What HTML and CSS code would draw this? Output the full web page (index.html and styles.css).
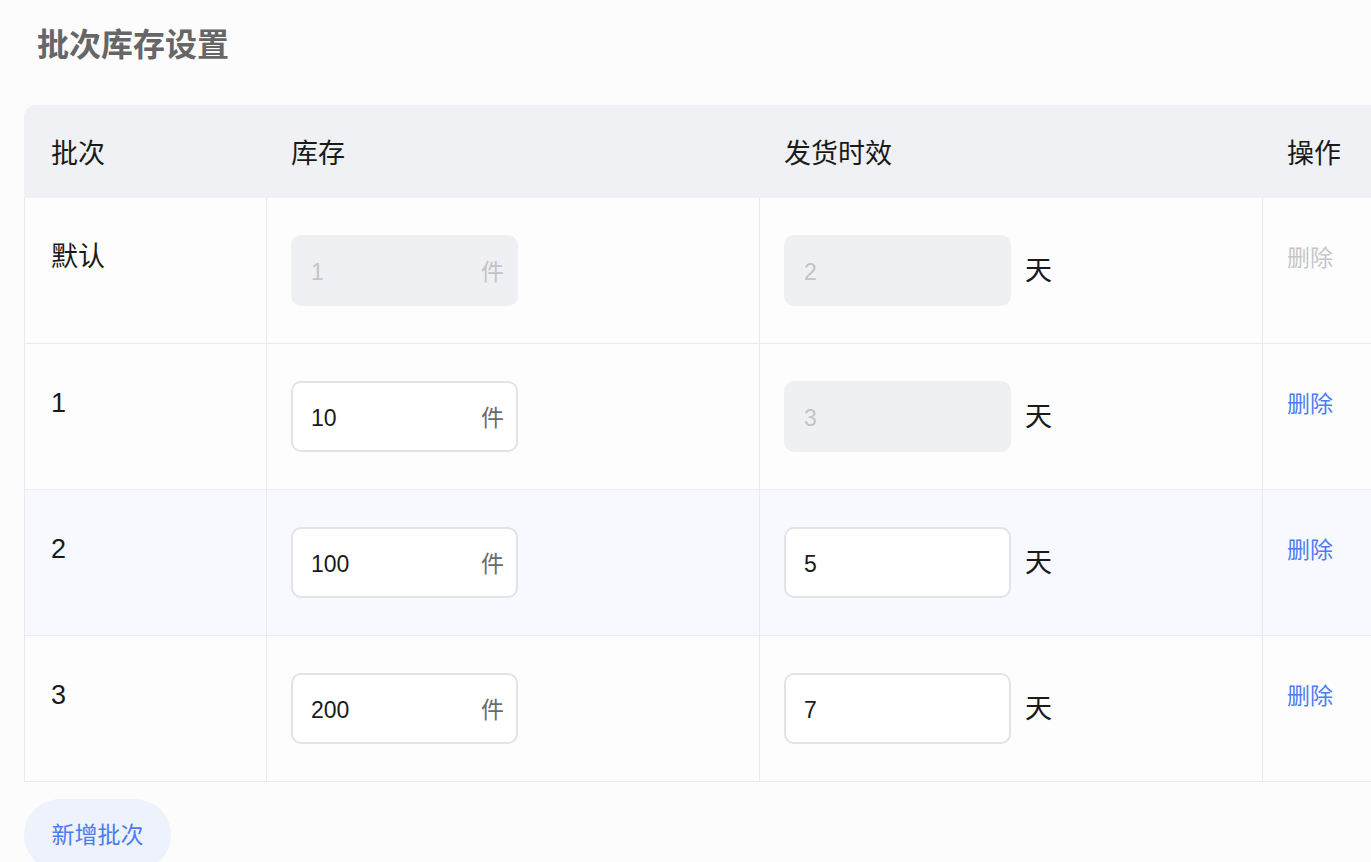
FILE: index.html
```html
<!DOCTYPE html>
<html lang="zh">
<head>
<meta charset="utf-8">
<link rel="stylesheet" href="styles.css">
</head>
<body>
<div class="page">
  <h1 class="title">批次库存设置</h1>
  <table class="grid">
    <colgroup>
      <col class="c1"><col class="c2"><col class="c3"><col class="c4">
    </colgroup>
    <thead>
      <tr><th class="first">批次</th><th>库存</th><th>发货时效</th><th>操作</th></tr>
    </thead>
    <tbody>
      <tr>
        <td class="label">默认</td>
        <td><div class="box disabled"><span class="val">1</span><span class="unit">件</span></div></td>
        <td><div class="days"><div class="box disabled"><span class="val">2</span></div><span class="tian">天</span></div></td>
        <td class="label"><span class="del off">删除</span></td>
      </tr>
      <tr>
        <td class="label">1</td>
        <td><div class="box"><span class="val">10</span><span class="unit">件</span></div></td>
        <td><div class="days"><div class="box disabled"><span class="val">3</span></div><span class="tian">天</span></div></td>
        <td class="label"><span class="del">删除</span></td>
      </tr>
      <tr class="hover">
        <td class="label">2</td>
        <td><div class="box"><span class="val">100</span><span class="unit">件</span></div></td>
        <td><div class="days"><div class="box"><span class="val">5</span></div><span class="tian">天</span></div></td>
        <td class="label"><span class="del">删除</span></td>
      </tr>
      <tr>
        <td class="label">3</td>
        <td><div class="box"><span class="val">200</span><span class="unit">件</span></div></td>
        <td><div class="days"><div class="box"><span class="val">7</span></div><span class="tian">天</span></div></td>
        <td class="label"><span class="del">删除</span></td>
      </tr>
    </tbody>
  </table>
  <button class="add">新增批次</button>
</div>
</body>
</html>
```

FILE: styles.css
```css
html, body {
  margin: 0;
  padding: 0;
  background: #fcfcfd;
  overflow: hidden;
  font-family: "Liberation Sans", "Noto Sans CJK SC", sans-serif;
  color: #1a1a1a;
}
.page {
  padding: 23px 0 0 24px;
  width: 1500px;
}
.title {
  margin: 0 0 38px 13px;
  font-size: 32px;
  line-height: 44px;
  font-weight: 700;
  color: #666666;
}
.grid {
  border-collapse: separate;
  border-spacing: 0;
  table-layout: fixed;
  width: 1441px;
}
.c1 { width: 243px; }
.c2 { width: 493px; }
.c3 { width: 503px; }
.c4 { width: 202px; }
th {
  background: #f0f1f5;
  height: 93px;
  padding: 0 0 0 24px;
  text-align: left;
  font-weight: 400;
  font-size: 27px;
  color: #1a1a1a;
}
th.first {
  border-top-left-radius: 12px;
  padding-left: 27px;
}
td {
  height: 146px;
  box-sizing: border-box;
  vertical-align: top;
  padding: 37px 0 0 24px;
  border-right: 1px solid #e9eaf0;
  border-bottom: 1px solid #e9eaf0;
  background: #fdfdfe;
}
td:first-child {
  border-left: 1px solid #e9eaf0;
  padding-left: 26px;
}
td:last-child { border-right: none; }
tr.hover td { background: #f8f9fe; }
td.label {
  padding-top: 42px;
  font-size: 27px;
  line-height: 34px;
}
td.label:last-child { padding-left: 24px; }
.box {
  box-sizing: border-box;
  width: 227px;
  height: 71px;
  border: 2px solid #e2e3e8;
  border-radius: 10px;
  background: #ffffff;
  display: flex;
  align-items: center;
  justify-content: space-between;
  padding: 3px 12px 0 18px;
  font-size: 23px;
}
.box.disabled {
  background: #eff0f4;
  border-color: #eff0f4;
  color: #c4c4c6;
}
.val { color: inherit; }
.box .unit {
  color: #6b6b6b;
  font-size: 23px;
  margin-top: -5px;
}
.box.disabled .unit { color: #c4c4c6; }
.days {
  display: flex;
  align-items: center;
  gap: 14px;
}
.tian {
  font-size: 27px;
  color: #1a1a1a;
  margin-top: -5px;
}
.del {
  font-size: 23px;
  color: #4e7cf3;
}
.del.off { color: #c6c6c8; }
.add {
  margin-top: 17px;
  width: 147px;
  height: 72px;
  border: none;
  border-radius: 36px;
  background: #eef2fd;
  color: #4a7bef;
  font-family: "Liberation Sans", "Noto Sans CJK SC", sans-serif;
  font-size: 23px;
  padding: 0;
  padding-bottom: 4px;
}
```
